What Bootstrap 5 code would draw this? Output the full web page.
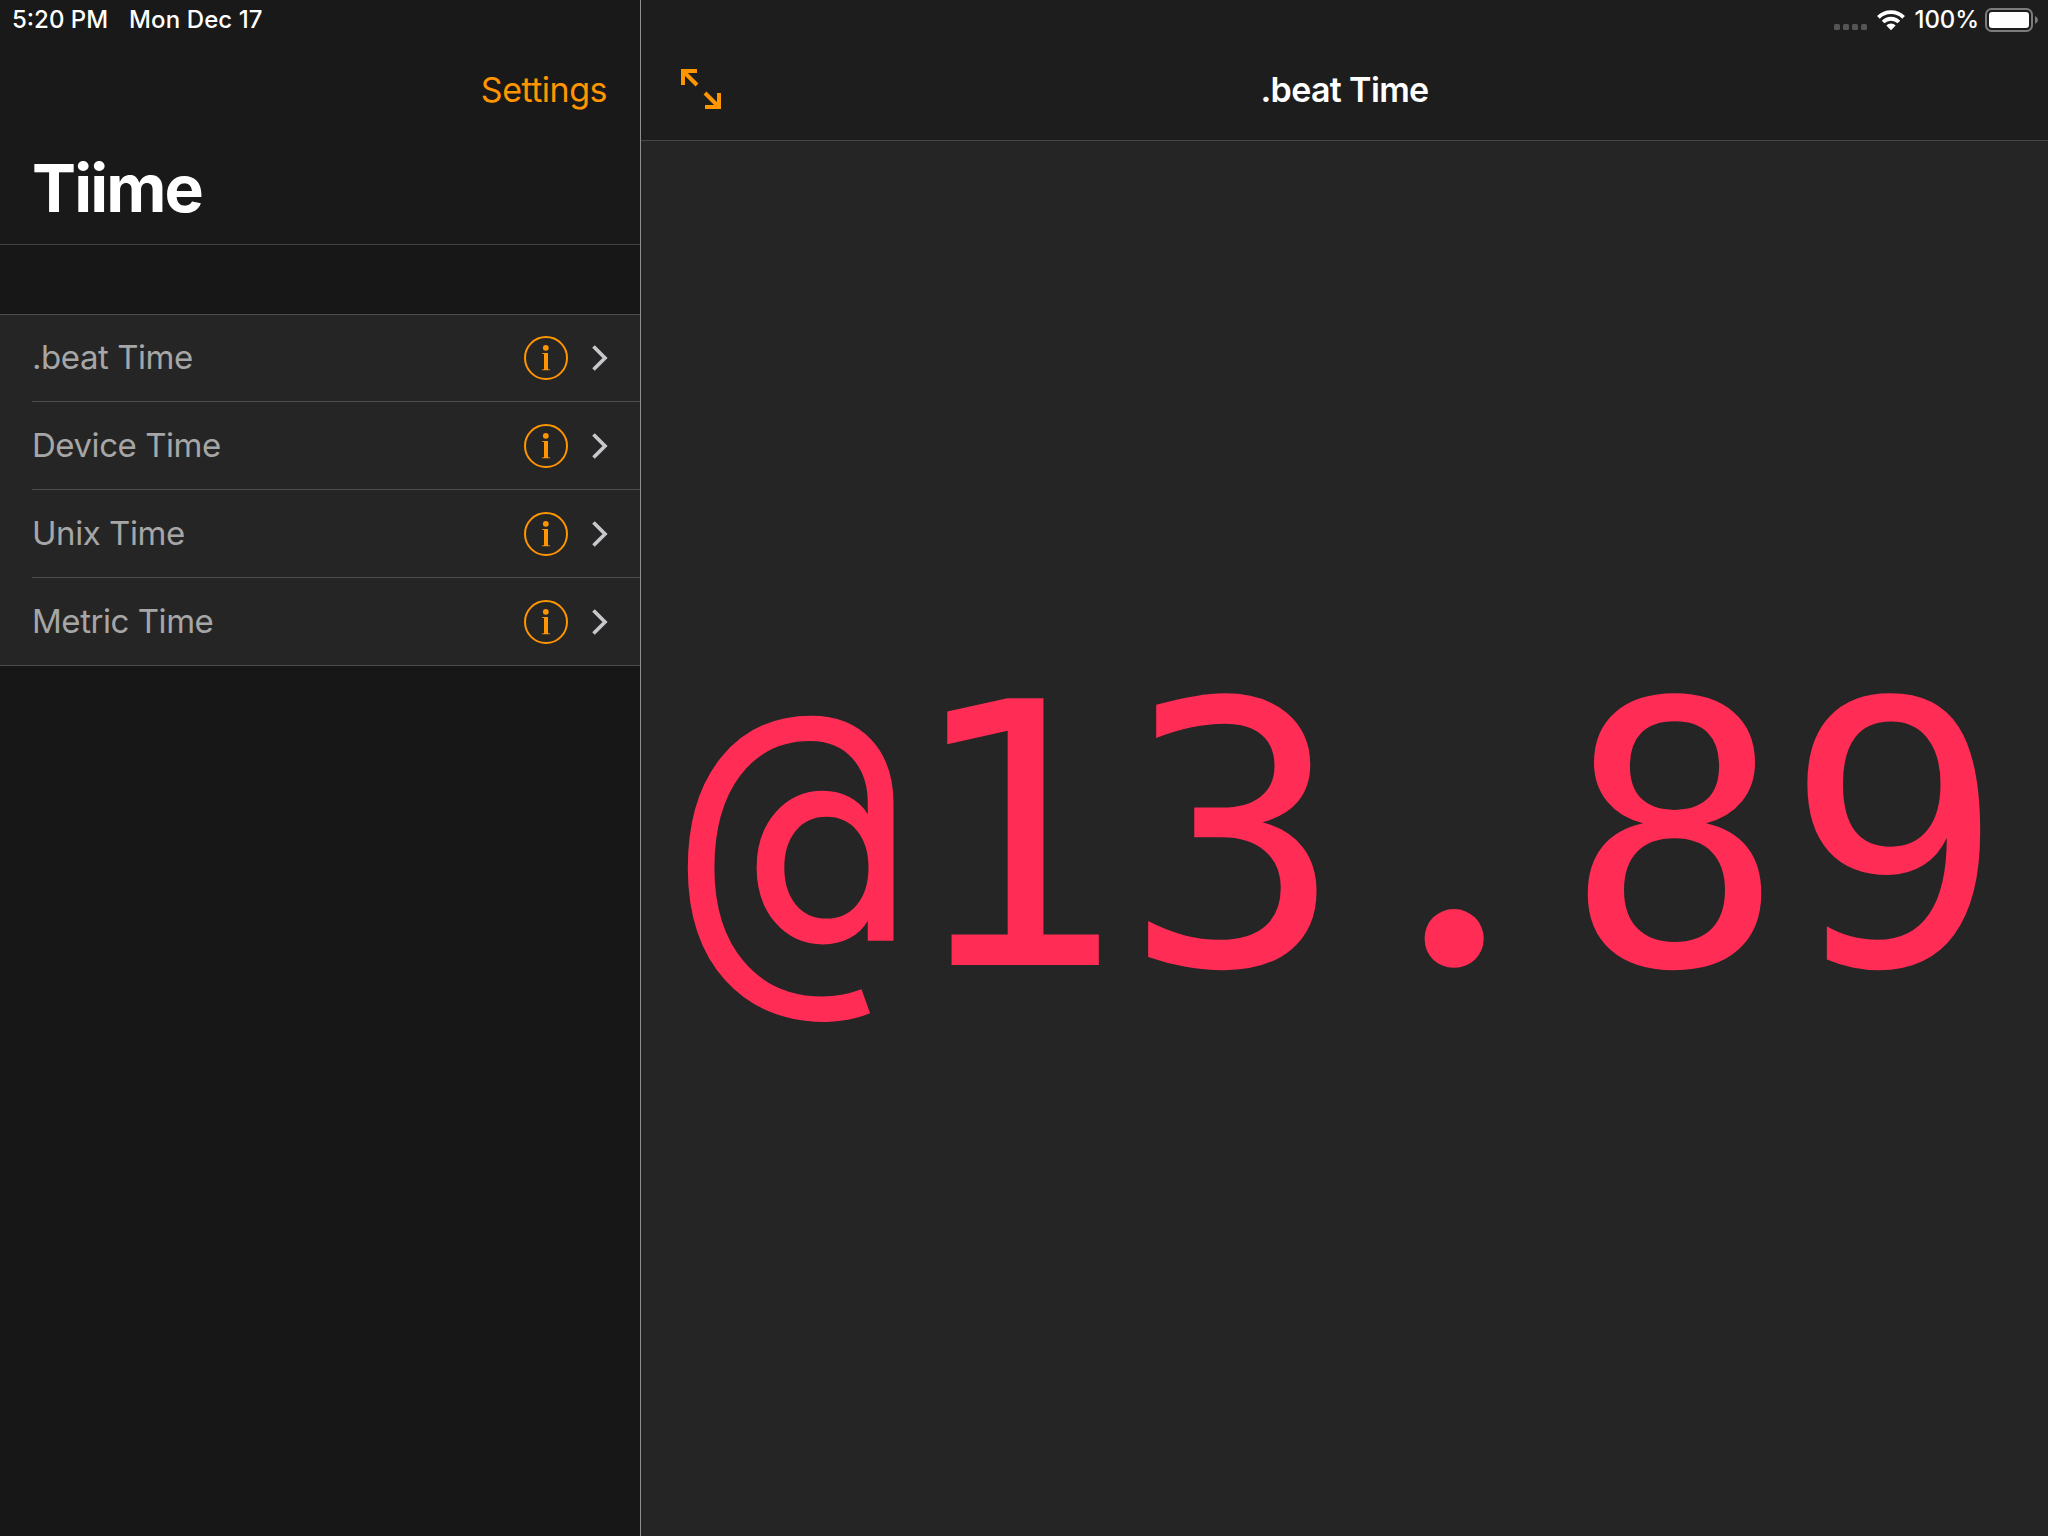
<!DOCTYPE html>
<html lang="en" data-bs-theme="dark">
<head>
<meta charset="utf-8">
<title>Tiime</title>
<link href="https://cdn.jsdelivr.net/npm/bootstrap@5.3.0/dist/css/bootstrap.min.css" rel="stylesheet">
<style>
html,body{height:100%}
body{font-family:Inter,"Liberation Sans",sans-serif;background:#171717;color:#fff;overflow:hidden;-webkit-font-smoothing:antialiased}
.sidebar{width:641px;border-right:1px solid #8e8e93;background:#171717}
.side-head{height:245px;background:#191919;border-bottom:1px solid #414141}
.statusbar{height:40px;font-size:24px;line-height:40px;font-weight:450}
.side-status{padding-left:12px;gap:21px}
.clock{letter-spacing:0}
.date{letter-spacing:.1px}
.tint{color:#ff9500}
.toolbar-line{height:100px;line-height:100px;font-size:34px}
.side-tools{padding-right:33px}
.settings{letter-spacing:-.5px}
.app-title{font-size:66px;line-height:96px;font-weight:700;letter-spacing:-1.9px;padding-left:32px;margin:0}
.zones{margin-top:69px;background:#252525;border-top:1px solid #4d4d4d;border-bottom:1px solid #4d4d4d}
.zone{height:88px;padding-left:32px}
.zone:first-child{height:87px}
.zone:last-child .zone-in{border-bottom:0}
.zone:last-child{height:87px}
.zone-in{border-bottom:1px solid #4d4d4d;color:#a6a6a6;font-size:33px;padding-right:32px}
.zone-name{letter-spacing:-.45px}
.nav-main{height:141px;background:#1d1d1d;border-bottom:1px solid #474747}
.main-status{padding-right:9px}
.pct{margin-left:10px;letter-spacing:-.1px}
.battery{margin-left:6px}
.nav-title{font-weight:600;letter-spacing:-.65px}
.stage{background:#252525;padding-bottom:8px;padding-right:1px}
.readout{font-family:"DejaVu Sans Mono",monospace;font-size:366px;line-height:426px;color:#ff2d55;white-space:nowrap}
.dot{display:inline-block;width:220.300px;text-align:center;font-family:Lato,sans-serif;font-weight:700;font-size:390px;line-height:1}
svg{display:block;flex:none}
</style>
</head>
<body class="d-flex">
<aside class="sidebar flex-shrink-0 vh-100">
  <header class="side-head">
    <div class="statusbar side-status d-flex"><span class="clock">5:20 PM</span><span class="date">Mon Dec 17</span></div>
    <div class="toolbar-line side-tools d-flex justify-content-end"><span class="tint settings">Settings</span></div>
    <h1 class="app-title">Tiime</h1>
  </header>
  <svg width="0" height="0" class="position-absolute">
    <symbol id="info" viewBox="0 0 44 44"><circle cx="22" cy="22" r="21" fill="none" stroke="#ff9500" stroke-width="2"/><circle cx="21.800" cy="11.800" r="2.900" fill="#ff9500"/><path d="M18 17h6v16.200l2 .3v.8h-8v-.8l2-.3V18.100l-2-.3z" fill="#ff9500"/></symbol>
    <symbol id="chev" viewBox="0 0 16 26"><path d="M1.500 1.500 13 13 1.500 24.500" fill="none" stroke="#c7c7cc" stroke-width="3.700"/></symbol>
  </svg>
  <div class="zones">
    <div class="zone"><div class="zone-in h-100 d-flex align-items-center"><span class="zone-name me-auto">.beat Time</span><svg width="44" height="44"><use href="#info"/></svg><svg class="ms-4" width="16" height="26"><use href="#chev"/></svg></div></div>
    <div class="zone"><div class="zone-in h-100 d-flex align-items-center"><span class="zone-name me-auto">Device Time</span><svg width="44" height="44"><use href="#info"/></svg><svg class="ms-4" width="16" height="26"><use href="#chev"/></svg></div></div>
    <div class="zone"><div class="zone-in h-100 d-flex align-items-center"><span class="zone-name me-auto">Unix Time</span><svg width="44" height="44"><use href="#info"/></svg><svg class="ms-4" width="16" height="26"><use href="#chev"/></svg></div></div>
    <div class="zone"><div class="zone-in h-100 d-flex align-items-center"><span class="zone-name me-auto">Metric Time</span><svg width="44" height="44"><use href="#info"/></svg><svg class="ms-4" width="16" height="26"><use href="#chev"/></svg></div></div>
  </div>
</aside>
<main class="d-flex flex-column flex-grow-1 vh-100">
  <header class="nav-main">
    <div class="statusbar main-status d-flex justify-content-end">
      <svg width="44" height="40" viewBox="0 0 44 40" fill="#555"><rect x="1" y="24" width="6" height="6" rx="1.500"/><rect x="10" y="24" width="6" height="6" rx="1.500"/><rect x="19" y="24" width="6" height="6" rx="1.500"/><rect x="28" y="24" width="6" height="6" rx="1.500"/></svg>
      <svg width="28" height="40" viewBox="0 0 28 40"><g fill="none" stroke="#fff" stroke-width="3.800"><path d="M1.400 17.300a17.900 17.900 0 0 1 25.200 0"/><path d="M6.100 22a11.200 11.200 0 0 1 15.800 0"/></g><path d="M9.300 25.500a6.700 6.700 0 0 1 9.400 0L14 30.200z" fill="#fff"/></svg>
      <span class="pct">100%</span>
      <svg class="battery" width="54" height="40" viewBox="0 0 54 40"><rect x="1" y="9" width="46" height="22" rx="5.500" fill="none" stroke="#7c7c7c" stroke-width="2"/><rect x="4" y="12" width="40" height="16" rx="3" fill="#fff"/><path d="M50 16q3 1.500 3 4t-3 4z" fill="#7c7c7c"/></svg>
    </div>
    <div class="toolbar-line d-flex position-relative justify-content-center">
      <svg class="position-absolute start-0" width="80" height="100" viewBox="641 40 80 100"><g fill="none" stroke="#ff9500" stroke-width="4"><path d="M697 71H683V85M683 71 697 85"/><path d="M705 107H719V93M719 107 705 93"/></g></svg>
      <span class="nav-title">.beat Time</span>
    </div>
  </header>
  <section class="stage flex-grow-1 d-flex align-items-center justify-content-center">
    <div class="readout">@13<span class="dot">.</span>89</div>
  </section>
</main>
<script src="https://cdn.jsdelivr.net/npm/bootstrap@5.3.0/dist/js/bootstrap.bundle.min.js"></script>
</body>
</html>
